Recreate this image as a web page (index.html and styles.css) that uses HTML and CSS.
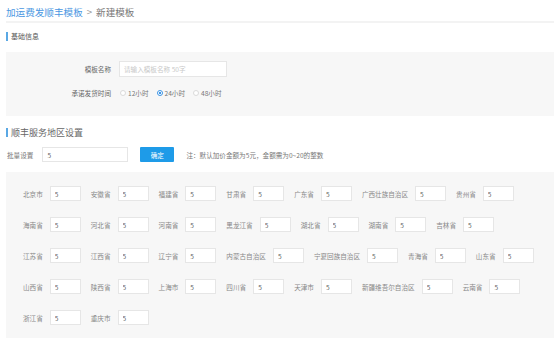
FILE: index.html
```html
<!DOCTYPE html>
<html lang="zh-CN">
<head>
    <meta charset="UTF-8">
    <meta name="viewport" content="width=device-width, initial-scale=1.0">
    <title>新建模板</title>
    <link rel="stylesheet" href="styles.css">
</head>
<body>

    <div class="crumb">
        <a class="crumb-link" href="#">加运费发顺丰模板</a><span class="crumb-sep">&gt;</span><span class="crumb-cur">新建模板</span>
    </div>

    <div class="section-title">基础信息</div>
    <div class="panel basic">
        <div class="form-row">
            <label class="form-label">模板名称</label>
            <input type="text" class="text-input name-input" placeholder="请输入模板名称 50字">
        </div>
        <div class="form-row">
            <label class="form-label">承诺发货时间</label>
            <div class="radios">
                <span class="radio"><i class="dot"></i>12小时</span>
                <span class="radio checked"><i class="dot"></i>24小时</span>
                <span class="radio"><i class="dot"></i>48小时</span>
            </div>
        </div>
    </div>

    <div class="section-title big">顺丰服务地区设置</div>
    <div class="batch">
        <label class="batch-label">批量设置</label>
        <input type="text" class="text-input batch-input" value="5">
        <button class="btn">确定</button>
        <span class="note">注：默认加价金额为5元，金额需为0~20的整数</span>
    </div>

    <div class="panel regions" id="regions"></div>

    <script>
        var areas = ["北京市", "安徽省", "福建省", "甘肃省", "广东省", "广西壮族自治区", "贵州省",
            "海南省", "河北省", "河南省", "黑龙江省", "湖北省", "湖南省", "吉林省",
            "江苏省", "江西省", "辽宁省", "内蒙古自治区", "宁夏回族自治区", "青海省", "山东省",
            "山西省", "陕西省", "上海市", "四川省", "天津市", "新疆维吾尔自治区", "云南省",
            "浙江省", "重庆市"];

        var html = "";
        areas.forEach(function (name) {
            html += '<div class="area"><label class="area-label">' + name + '</label>' +
                '<input type="text" class="text-input area-input" value="5"></div>';
        });
        document.getElementById("regions").innerHTML = html;
    </script>

</body>
</html>
```

FILE: styles.css
```css
body { margin: 0; padding: 0 0 0 6px; font-family: "Noto Sans CJK SC", "Noto Sans", sans-serif; font-size: 6.6px; color: #777; background: #fff; }

.crumb { padding: 5px 0 2px; line-height: 14px; font-size: 9.6px; border-bottom: 2px solid #f3f3f3; }
.crumb-link { color: #4a97e2; text-decoration: none; }
.crumb-sep { margin: 0 4px; color: #999; }
.crumb-cur { color: #777; }

.section-title { margin-top: 9px; height: 9px; line-height: 9px; padding-left: 3px; border-left: 2px solid #5aa8e4; font-size: 7px; color: #555; }
.section-title.big { margin-top: 12px; font-size: 9px; color: #666; }

.panel { background: #f7f7f7; }
.basic { margin-top: 11px; padding: 9px 0 15px; }

.form-row { display: flex; align-items: center; height: 16px; }
.form-row + .form-row { margin-top: 8px; }
.form-label { width: 105px; margin-right: 8px; text-align: right; color: #666; }

.text-input { box-sizing: border-box; height: 15px; padding: 0 4px; border: 1px solid #e6e6e6; background: #fff; font-family: inherit; font-size: 6.6px; color: #666; outline: none; }
.text-input::placeholder { color: #c8c8c8; }
.name-input { width: 108px; height: 16px; }

.radios { display: flex; align-items: center; gap: 8px; margin-left: 1px; }
.radio { display: flex; align-items: center; color: #777; }
.dot { box-sizing: border-box; width: 6px; height: 6px; margin-right: 2px; border: 1px solid #dadada; border-radius: 50%; background: #fff; }
.radio.checked .dot { border-color: #3d95e6; background: radial-gradient(circle, #3d95e6 45%, #fff 55%); }

.batch { display: flex; align-items: center; margin-top: 10px; padding-left: 1px; height: 15px; }
.batch-label { margin-right: 9px; color: #777; }
.batch-input { width: 86px; }
.btn { height: 15px; width: 34px; margin-left: 12px; padding: 0; border: 0; border-radius: 1px; background: #1e9be8; color: #fff; font-family: inherit; font-size: 6.6px; cursor: pointer; }
.note { margin-left: 12px; color: #777; }

.regions { display: flex; flex-wrap: wrap; column-gap: 10px; row-gap: 16px; margin-top: 10px; padding: 14px 10px 13px 17px; }
.area { display: flex; align-items: center; }
.area-label { margin-right: 7px; color: #888; }
.area-input { width: 31px; }
```
